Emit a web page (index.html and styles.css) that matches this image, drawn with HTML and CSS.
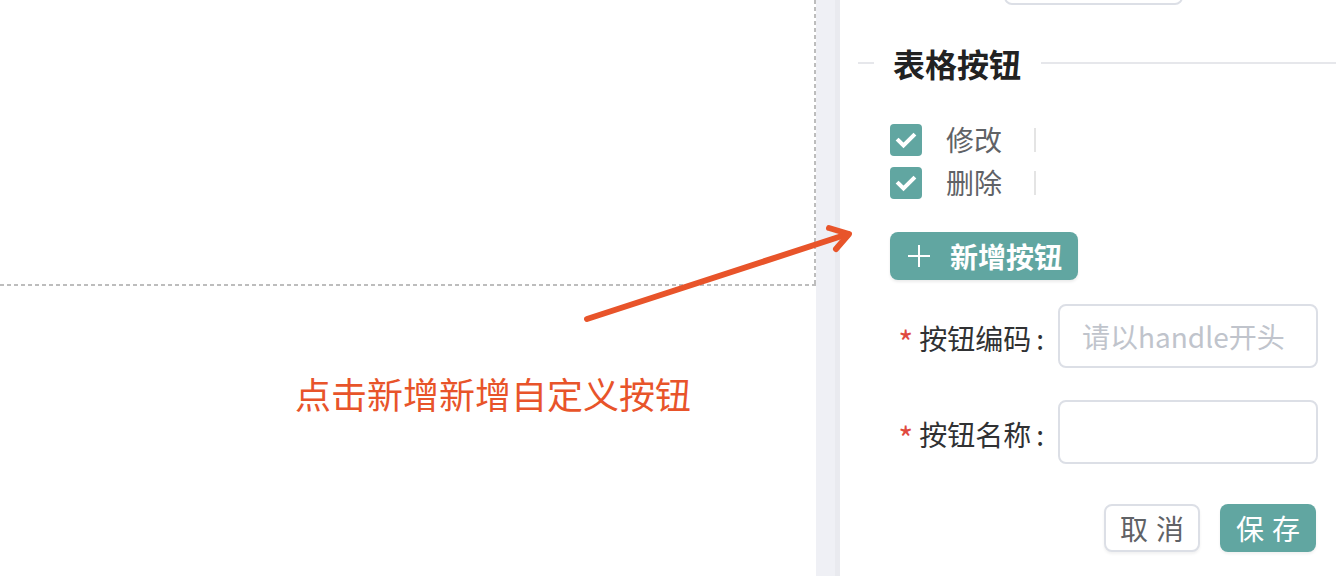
FILE: index.html
```html
<!DOCTYPE html>
<html lang="zh-CN">
<head>
<meta charset="utf-8">
<title>表格按钮</title>
<link rel="stylesheet" href="styles.css">
</head>
<body>
<div class="page">
  <div class="canvas">
    <div class="dash-box"></div>
  </div>
  <div class="gutter"></div>
  <div class="panel">
    <div class="top-box"></div>
    <div class="divider">
      <span class="divider-line short"></span>
      <span class="divider-title">表格按钮</span>
      <span class="divider-line long"></span>
    </div>
    <div class="check-list">
      <div class="check-row">
        <span class="checkbox"><svg width="32" height="32" viewBox="0 0 32 32"><polyline points="8.5,16.5 13.5,21.5 23.5,11.5" fill="none" stroke="#fff" stroke-width="4" stroke-linecap="square"/></svg></span>
        <span class="check-label">修改</span>
        <span class="sep"></span>
      </div>
      <div class="check-row">
        <span class="checkbox"><svg width="32" height="32" viewBox="0 0 32 32"><polyline points="8.5,16.5 13.5,21.5 23.5,11.5" fill="none" stroke="#fff" stroke-width="4" stroke-linecap="square"/></svg></span>
        <span class="check-label">删除</span>
        <span class="sep"></span>
      </div>
    </div>
    <div class="add-row">
      <button class="btn-add"><svg width="22" height="22" viewBox="0 0 22 22"><path d="M11 0V22M0 11H22" stroke="#fff" stroke-width="2"/></svg><span>新增按钮</span></button>
    </div>
    <div class="form-row first">
      <label class="form-label"><span class="req">*</span>按钮编码<span class="colon">:</span></label>
      <div class="input placeholder">请以handle开头</div>
    </div>
    <div class="form-row second">
      <label class="form-label"><span class="req">*</span>按钮名称<span class="colon">:</span></label>
      <div class="input"></div>
    </div>
    <div class="footer">
      <button class="btn btn-cancel">取消</button>
      <button class="btn btn-save">保存</button>
    </div>
  </div>
</div>
<div class="annotation">
  <svg class="arrow" width="1342" height="576" viewBox="0 0 1342 576">
    <path d="M587 319 L848 234" stroke="#e8542a" stroke-width="6" stroke-linecap="round" fill="none"/>
    <path d="M829 228 L849 234 L836 249" stroke="#e8542a" stroke-width="6" stroke-linecap="round" stroke-linejoin="round" fill="none"/>
  </svg>
  <div class="note">点击新增新增自定义按钮</div>
</div>
</body>
</html>
```

FILE: styles.css
```css
html, body {
  margin: 0;
  padding: 0;
  background: #fff;
}
body {
  width: 1342px;
  height: 576px;
  overflow: hidden;
  position: relative;
  font-family: "Noto Sans CJK SC", "Noto Sans", sans-serif;
}
.page {
  display: flex;
  height: 576px;
}
.canvas {
  width: 816px;
  flex: none;
}
.dash-box {
  width: 816px;
  height: 286px;
  background:
    repeating-linear-gradient(to bottom, #bdbdbd 0 4px, transparent 4px 7px) right top / 2px 100% no-repeat,
    repeating-linear-gradient(to right, #bdbdbd 0 4px, transparent 4px 7px) left bottom / 100% 2px no-repeat;
}
.gutter {
  width: 19px;
  flex: none;
  background: #eff0f5;
  border-right: 5px solid #e9eaef;
}
.panel {
  flex: 1;
  padding: 0 6px 0 18px;
  display: flex;
  flex-direction: column;
}
.top-box {
  margin-top: -36px;
  margin-left: 146px;
  width: 175px;
  height: 37px;
  border: 2px solid #dcdfe6;
  border-radius: 8px;
}
.divider {
  margin-top: 38px;
  height: 40px;
  display: flex;
  align-items: center;
}
.divider-line {
  height: 2px;
  background: #e6e7eb;
}
.divider-line.short {
  width: 16px;
}
.divider-line.long {
  flex: 1;
}
.divider-title {
  padding: 0 20px 0 19px;
  font-size: 32px;
  font-weight: 700;
  color: #222;
  line-height: 40px;
}
.check-list {
  margin-top: 35px;
  padding-left: 32px;
  display: flex;
  flex-direction: column;
}
.check-row {
  height: 43px;
  display: flex;
  align-items: center;
}
.checkbox {
  width: 32px;
  height: 32px;
  border-radius: 4px;
  background: #61a6a1;
  display: block;
}
.checkbox svg {
  display: block;
}
.check-label {
  margin-left: 24px;
  font-size: 28px;
  color: #606266;
  line-height: 43px;
}
.sep {
  margin-left: 32px;
  width: 2px;
  height: 24px;
  background: #e4e4e4;
}
.add-row {
  margin-top: 28px;
  padding-left: 32px;
  display: flex;
}
.btn-add {
  height: 48px;
  width: 188px;
  border: none;
  border-radius: 8px;
  background: #61a6a1;
  box-shadow: 0 2px 3px rgba(0, 0, 0, 0.08);
  display: flex;
  align-items: center;
  padding: 0 0 0 18px;
  gap: 20px;
  color: #fff;
  font-family: inherit;
  font-size: 28px;
  font-weight: 700;
}
.btn-add svg {
  display: block;
}
.form-row {
  display: flex;
  align-items: center;
  padding-left: 32px;
}
.form-row.first {
  margin-top: 24px;
}
.form-row.second {
  margin-top: 32px;
}
.form-label {
  width: 154px;
  padding-right: 14px;
  text-align: right;
  font-size: 28px;
  color: #303133;
  white-space: nowrap;
}
.req {
  color: #e04a3f;
  margin-right: 6px;
  font-size: 32px;
  position: relative;
  top: 5px;
}
.colon {
  margin-left: 5px;
}
.input {
  width: 256px;
  height: 60px;
  border: 2px solid #dcdfe6;
  border-radius: 8px;
  box-sizing: content-box;
  font-size: 28px;
  line-height: 60px;
  padding-left: 0;
}
.input.placeholder {
  color: #c0c4cc;
  text-indent: 22px;
}
.footer {
  margin-top: 40px;
  display: flex;
  justify-content: flex-end;
  gap: 20px;
  padding-right: 20px;
}
.btn {
  width: 96px;
  height: 48px;
  border-radius: 8px;
  font-family: inherit;
  font-size: 28px;
  letter-spacing: 8px;
  padding: 0 0 0 8px;
  box-shadow: 0 2px 3px rgba(0, 0, 0, 0.06);
  display: flex;
  align-items: center;
  justify-content: center;
}
.btn-cancel {
  background: #fff;
  border: 2px solid #dcdfe6;
  color: #606266;
}
.btn-save {
  background: #61a6a1;
  border: none;
  color: #fff;
}
.annotation {
  position: absolute;
  left: 0;
  top: 0;
  width: 1342px;
  height: 576px;
  pointer-events: none;
}
.arrow {
  position: absolute;
  left: 0;
  top: 0;
}
.note {
  position: absolute;
  left: 295px;
  top: 371px;
  font-size: 36px;
  line-height: 44px;
  color: #e8542a;
  white-space: nowrap;
}
```
